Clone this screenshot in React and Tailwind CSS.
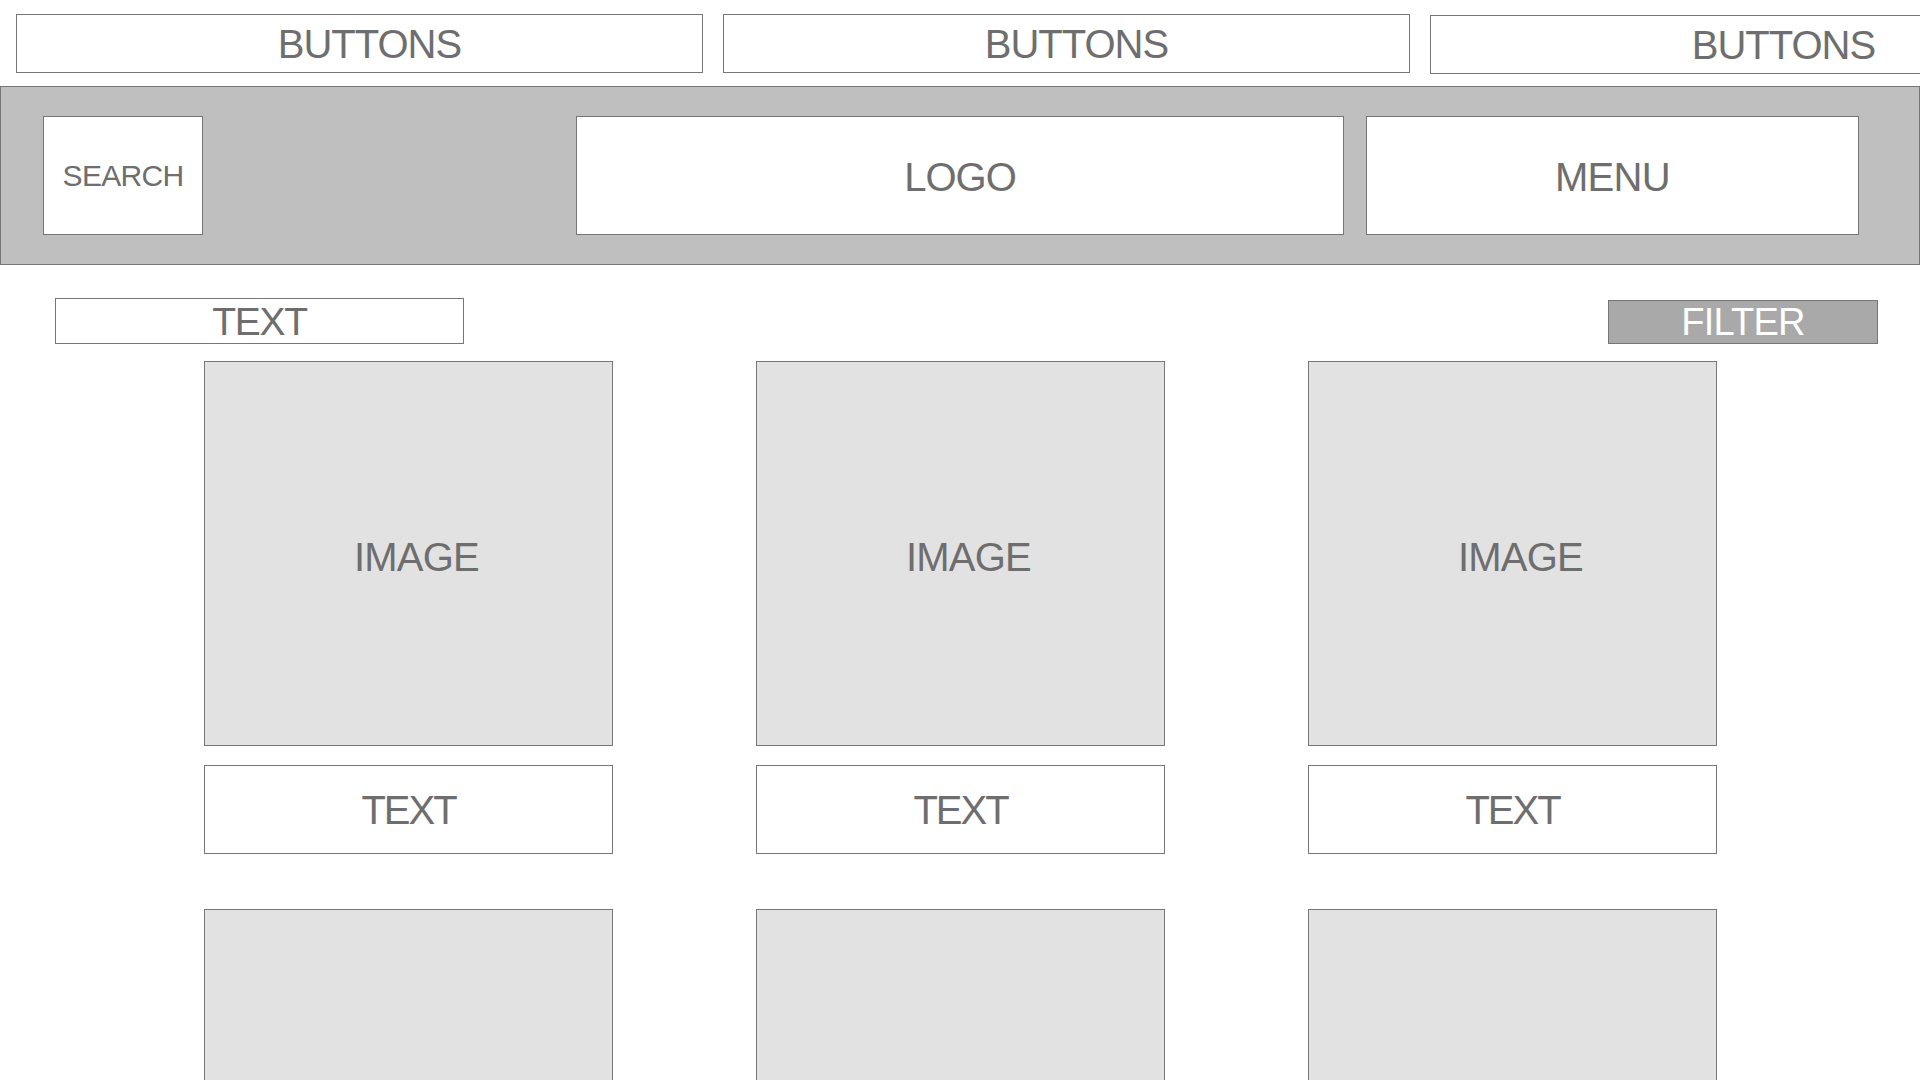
import React from "react";

const font = "font-['Liberation_Sans',Arial,sans-serif]";

const TopButton = ({ extra = "" }) => (
    <div
        className={`w-[687px] h-[59px] shrink-0 border border-[#767676] bg-white flex items-center justify-center pl-[20px] pt-px ${extra}`}
    >
        <span className="text-[40px] leading-none tracking-[-1px] text-[#6e6e6e]">BUTTONS</span>
    </div>
);

const Card = ({ label = true }) => (
    <div className="flex flex-col">
        <div className="h-[385px] border border-[#767676] bg-[#e2e2e2] flex items-center justify-center pl-[16px] pt-[6px]">
            {label && (
                <span className="text-[40px] leading-none tracking-[-0.8px] text-[#6e6e6e]">IMAGE</span>
            )}
        </div>
        {label && (
            <div className="mt-[19px] h-[89px] border border-[#767676] bg-white flex items-center justify-center">
                <span className="text-[40px] leading-none tracking-[-2px] text-[#6e6e6e]">TEXT</span>
            </div>
        )}
    </div>
);

const App = () => {
    return (
        <div className={`w-[1920px] h-[1080px] overflow-hidden bg-white ${font}`}>
            {/* top buttons row */}
            <div className="flex items-start gap-[20px] pl-[16px] pt-[14px]">
                <TopButton />
                <TopButton />
                <TopButton extra="mt-px" />
            </div>

            {/* header band */}
            <div className="mt-[12px] h-[179px] border border-[#767676] bg-[#bfbfbf] flex items-start pt-[29px] pl-[42px]">
                <div className="w-[160px] h-[119px] shrink-0 border border-[#767676] bg-white flex items-center justify-center pt-px">
                    <span className="text-[30px] leading-none tracking-[-0.7px] text-[#6e6e6e]">SEARCH</span>
                </div>
                <div className="ml-[373px] w-[768px] h-[119px] shrink-0 border border-[#767676] bg-white flex items-center justify-center pt-[2px]">
                    <span className="text-[40px] leading-none tracking-[-1px] text-[#6e6e6e]">LOGO</span>
                </div>
                <div className="ml-[22px] w-[493px] h-[119px] shrink-0 border border-[#767676] bg-white flex items-center justify-center pt-[2px]">
                    <span className="text-[40px] leading-none tracking-[-0.7px] text-[#6e6e6e]">MENU</span>
                </div>
            </div>

            {/* text + filter row */}
            <div className="mt-[33px] flex items-start justify-between pl-[55px] pr-[42px]">
                <div className="w-[409px] h-[46px] border border-[#767676] bg-white flex items-center justify-center">
                    <span className="text-[39px] leading-none tracking-[-1.3px] text-[#6e6e6e]">TEXT</span>
                </div>
                <div className="mt-[2px] w-[270px] h-[44px] border border-[#767676] bg-[#a9a9a9] flex items-center justify-center">
                    <span className="text-[38px] leading-none tracking-[-0.8px] text-white">FILTER</span>
                </div>
            </div>

            {/* product grid */}
            <div className="mt-[17px] pl-[204px] grid grid-cols-[409px_409px_409px] gap-x-[143px] gap-y-[55px]">
                <Card />
                <Card />
                <Card />
                <Card label={false} />
                <Card label={false} />
                <Card label={false} />
            </div>
        </div>
    );
};

export default App;
